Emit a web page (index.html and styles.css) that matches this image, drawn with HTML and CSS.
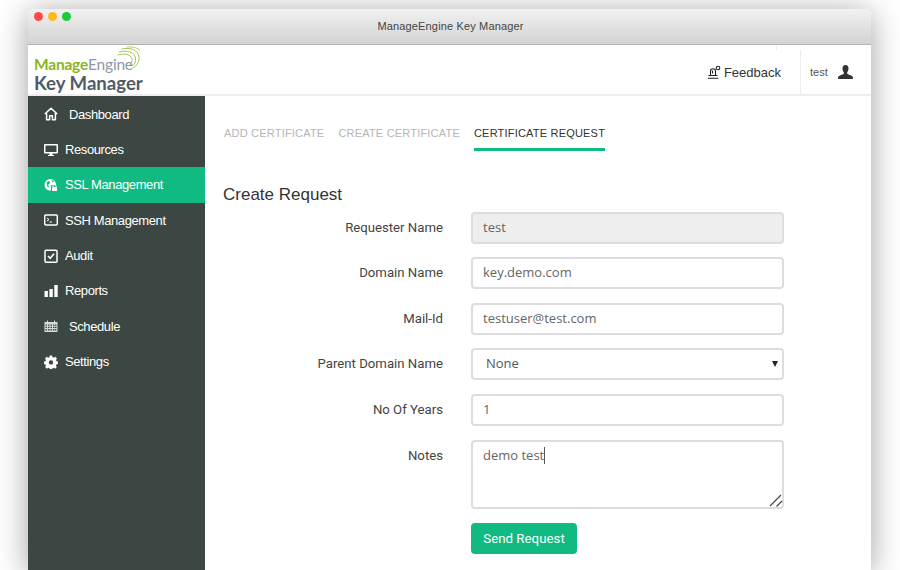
FILE: index.html
```html
<!DOCTYPE html>
<html lang="en">
<head>
<meta charset="utf-8">
<title>ManageEngine Key Manager</title>
<link rel="stylesheet" href="styles.css">
</head>
<body>
<div class="window">
  <div class="titlebar">
    <div class="lights"><i class="light red"></i><i class="light yellow"></i><i class="light green"></i></div>
    <div class="title">ManageEngine Key Manager</div>
  </div>
  <header class="topbar">
    <div class="logo">
      <div class="logo-me"><b>Manage</b>Engine</div>
      <div class="logo-km">Key Manager</div>
      <svg class="logo-arcs" width="40" height="30" viewBox="0 0 40 30" fill="none" stroke="#a4c64e" stroke-linecap="round">
        <path d="M18 2C23 1.500 28 2.500 31 5" stroke-width=".8"/>
        <path d="M13 4C22 2 29 5 30 12C30.500 16 28 21 24 23" stroke-width="1"/>
        <path d="M10 7C18 5 25.500 7 26.500 13C27 16 26 19 24 20.500" stroke-width="1"/>
        <path d="M9 10C15 8 22 9 23 14C23.500 16 22.500 18.500 21 20" stroke-width="1"/>
      </svg>
    </div>
    <div class="top-right">
      <a class="feedback">
        <svg width="14" height="14" viewBox="0 0 14 14" fill="none" stroke="#222" stroke-width="1.100">
          <circle cx="11" cy="3" r="1.800"/>
          <path d="M3.500 10.500V6C3.500 3 8.500 3 8.500 6V10.500M5.500 5.500V8.500M1.500 10.500H10.500M.8 13.300H11.200"/>
        </svg>
        Feedback
      </a>
      <div class="user">
        <span>test</span>
        <svg width="15" height="14" viewBox="0 0 15 14" fill="#333">
          <path d="M7.500 0C5.400 0 4.400 1.500 4.500 3.600C4.600 5.400 5.100 6.600 5.800 7.300V8.700C4.500 9.800 1.300 10.300 .5 11.500C.2 12 0 13 0 14H15C15 13 14.800 12 14.500 11.500C13.700 10.300 10.500 9.800 9.200 8.700V7.300C9.900 6.600 10.400 5.400 10.500 3.600C10.600 1.500 9.600 0 7.500 0Z"/>
        </svg>
      </div>
    </div>
  </header>
  <div class="main">
    <nav class="sidebar">
      <a class="nav-item wide">
        <svg class="ico" viewBox="0 0 14 14" fill="none" stroke="#fff" stroke-width="1.500" stroke-linejoin="round"><path d="M.8 7 7 1.200 13.200 7M2.600 6V12.800H5.600V8.800H8.400V12.800H11.400V6"/></svg>
        Dashboard
      </a>
      <a class="nav-item">
        <svg class="ico" viewBox="0 0 14 14" fill="#fff"><path fill-rule="evenodd" d="M1 1H13Q14 1 14 2V9.500Q14 10.500 13 10.500H8.500V12H10V13H4V12H5.500V10.500H1Q0 10.500 0 9.500V2Q0 1 1 1ZM1.500 2.500V9H12.500V2.500Z"/></svg>
        Resources
      </a>
      <a class="nav-item active">
        <svg class="ico" viewBox="0 0 14 14"><circle cx="6.300" cy="6.800" r="5.800" fill="#fff"/><path d="M2.500 4 5.500 3 6 5 4 7 5.500 9.500 3.500 9ZM7.500 2 10 3 8.500 4.500Z" fill="#10ba82"/><rect x="7" y="7" width="7" height="6.500" rx="1" fill="#10ba82"/><rect x="8" y="9" width="5" height="4" rx=".5" fill="#fff"/><path d="M9 9V7.800C9 6.500 12 6.500 12 7.800V9" fill="none" stroke="#fff"/></svg>
        SSL Management
      </a>
      <a class="nav-item">
        <svg class="ico" viewBox="0 0 14 14" fill="none" stroke="#fff"><rect x=".7" y="2" width="12.600" height="10" rx="1.200" stroke-width="1.500"/><path d="M3 5 5 6.500 3 8M5.500 9H8" stroke-width="1"/></svg>
        SSH Management
      </a>
      <a class="nav-item">
        <svg class="ico" viewBox="0 0 14 14" fill="none" stroke="#fff"><rect x="1" y="1.200" width="12" height="12" rx="1" stroke-width="1.500"/><path d="M4 7 6.200 9.300 10 4.800" stroke-width="1.600"/></svg>
        Audit
      </a>
      <a class="nav-item">
        <svg class="ico" viewBox="0 0 14 14" fill="#fff"><rect x=".5" y="7" width="3.400" height="6"/><rect x="5.400" y="5" width="3.400" height="8"/><rect x="10.300" y="1" width="3.400" height="12"/></svg>
        Reports
      </a>
      <a class="nav-item wide">
        <svg class="ico" viewBox="0 0 14 14" fill="#d8dcda"><path fill-rule="evenodd" d="M.5 3H3V1.500H4V3H10V1.500H11V3H13.500V13H.5ZM1.500 5.500V6.800H3V5.500ZM4 5.500V6.800H5.500V5.500ZM6.500 5.500V6.800H8V5.500ZM9 5.500V6.800H10.500V5.500ZM11 5.500V6.800H12.500V5.500ZM1.500 7.800V9H3V7.800ZM4 7.800V9H5.500V7.800ZM6.500 7.800V9H8V7.800ZM9 7.800V9H10.500V7.800ZM11 7.800V9H12.500V7.800ZM1.500 10V11.500H3V10ZM4 10V11.500H5.500V10ZM6.500 10V11.500H8V10ZM9 10V11.500H10.500V10ZM11 10V11.500H12.500V10Z"/></svg>
        Schedule
      </a>
      <a class="nav-item">
        <svg class="ico" viewBox="0 0 14 14" fill="#fff"><path fill-rule="evenodd" d="M5.800.5H8.200L8.600 2.300 9.700 2.800 11.300 1.800 13 3.500 12 5.100 12.500 6.200 13.900 6.600V9L12.400 9.400 11.900 10.500 12.800 12.100 11.100 13.700 9.600 12.800 8.500 13.200 8.200 14H5.800L5.400 13.200 4.300 12.800 2.800 13.700 1.100 12.100 2 10.500 1.500 9.400 0 9V6.600L1.500 6.200 2 5.100 1 3.500 2.700 1.800 4.300 2.800 5.400 2.300ZM7 5.200A2.200 2.200 0 1 0 7 9.600 2.200 2.200 0 1 0 7 5.200Z"/></svg>
        Settings
      </a>
    </nav>
    <section class="content">
      <div class="tabs">
        <a class="tab">ADD CERTIFICATE</a>
        <a class="tab">CREATE CERTIFICATE</a>
        <a class="tab current">CERTIFICATE REQUEST</a>
      </div>
      <h1 class="heading">Create Request</h1>
      <form class="form">
        <label class="lbl">Requester Name</label>
        <input class="field readonly" value="test" readonly>
        <label class="lbl">Domain Name</label>
        <input class="field" value="key.demo.com">
        <label class="lbl">Mail-Id</label>
        <input class="field" value="testuser@test.com">
        <label class="lbl">Parent Domain Name</label>
        <div class="select-wrap"><div class="field select">None</div><span class="arrow"></span></div>
        <label class="lbl">No Of Years</label>
        <input class="field" value="1">
        <label class="lbl">Notes</label>
        <div class="notes-wrap">
          <textarea class="field notes">demo test</textarea>
          <span class="caret"></span>
          <svg class="grip" width="14" height="13" viewBox="0 0 14 13" fill="none" stroke="#444" stroke-width="1.200"><path d="M1 12 12 1M7.500 12.500 13 7"/></svg>
        </div>
        <span></span>
        <div><button class="send" type="button">Send Request</button></div>
      </form>
    </section>
  </div>
</div>
</body>
</html>
```
FILE: styles.css
```css
* { box-sizing: border-box; }
html, body { margin: 0; height: 570px; overflow: hidden; background: #fff; }
body { padding: 9px 29px 0 28px; font-family: "Liberation Sans", Arial, sans-serif; color: #333; }
.window { height: 561px; border-radius: 6px 6px 0 0; background: #fff; box-shadow: 0 4px 32px rgba(0,0,0,.38); }
.titlebar { position: relative; height: 36px; padding: 0 0 2px 2px; border-radius: 6px 6px 0 0; background: linear-gradient(#f1f1f1, #d3d3d3); border-bottom: 1px solid #b3b3b3; display: flex; justify-content: center; align-items: center; }
.title { font-size: 11px; color: #444; letter-spacing: .15px; }
.lights { position: absolute; top: 3px; left: 6px; display: flex; gap: 5px; }
.light { width: 9px; height: 9px; border-radius: 50%; }
.red { background: #fc4b4b; } .yellow { background: #fdb822; } .green { background: #1fc93c; }
.topbar { position: relative; height: 51px; display: flex; justify-content: space-between; border-bottom: 2px solid #eee; }
.topbar::after { content: ""; position: absolute; top: 0; right: 94px; width: 1px; height: 5px; background: #eee; }
.logo { position: relative; padding: 11px 0 0 6px; width: 177px; }
.logo-me { font-family: Lato, "Open Sans", sans-serif; font-size: 15.500px; line-height: 16px; letter-spacing: -.2px; color: #8d97a6; }
.logo-me b { color: #8bb51c; font-weight: 700; }
.logo-km { font-family: Lato, "Open Sans", sans-serif; font-weight: 700; font-size: 18.600px; line-height: 22px; color: #505b68; }
.logo-arcs { position: absolute; left: 81px; top: 0; }
.top-right { display: flex; align-items: stretch; }
.feedback { display: flex; align-items: center; gap: 3px; font-size: 13px; color: #333; padding: 5px 19px 0 0; }
.user { width: 71px; margin-top: 5px; border-left: 1px solid #eee; display: flex; align-items: center; gap: 10px; padding: 0 0 0 9px; font-size: 11px; color: #555; }
.main { display: flex; height: 474px; }
.sidebar { width: 177px; flex: none; padding-top: .5px; background: #3c4643; }
.nav-item { height: 35.360px; display: flex; align-items: center; gap: 7px; padding-left: 16px; color: #fff; font-size: 13px; letter-spacing: -.4px; }
.nav-item.wide { gap: 11px; }
.nav-item.active { background: #10ba82; }
.ico { width: 14px; height: 14px; flex: none; }
.content { flex: 1; padding: 0 0 0 18px; }
.tabs { display: flex; gap: 14px; height: 55px; padding-top: 29px; margin-left: 1px; }
.tab { font-size: 11px; letter-spacing: .2px; color: #b5b5b5; height: 26px; line-height: 17px; }
.tab.current { color: #333; border-bottom: 3px solid #10ba82; }
.heading { margin: 32px 0 0; font-size: 17px; font-weight: 400; line-height: 24px; color: #333; }
.form { display: grid; grid-template-columns: 220px 313px; column-gap: 28px; row-gap: 13.600px; margin-top: 4.600px; }
.lbl { font-size: 13.200px; text-align: right; line-height: 32px; color: #444; font-family: Roboto, "Liberation Sans", sans-serif; }
.field { display: block; width: 313px; height: 32px; border: 2px solid #ddd; border-radius: 4px; padding: 0 10px 2px; font-family: "Open Sans", sans-serif; font-size: 13px; color: #666; background: #fff; outline: none; }
.readonly { background: #eee; }
.select-wrap { position: relative; }
.select { line-height: 26px; padding-left: 13px; color: #555; }
.arrow { position: absolute; right: 6px; top: 13px; border: 3.500px solid transparent; border-top: 6px solid #222; border-bottom: 0; }
.notes-wrap { position: relative; height: 69.500px; }
.notes { height: 69px; padding: 4px 10px; line-height: 18px; resize: none; }
.caret { position: absolute; left: 73px; top: 7px; width: 1px; height: 17px; background: #555; }
.grip { position: absolute; right: 1px; bottom: 2px; }
.send { display: block; width: 106px; height: 31px; border: 0; border-radius: 4px; background: #10ba82; color: #fff; font-family: Roboto, "Liberation Sans", sans-serif; font-size: 13.300px; padding: 0; }
```
